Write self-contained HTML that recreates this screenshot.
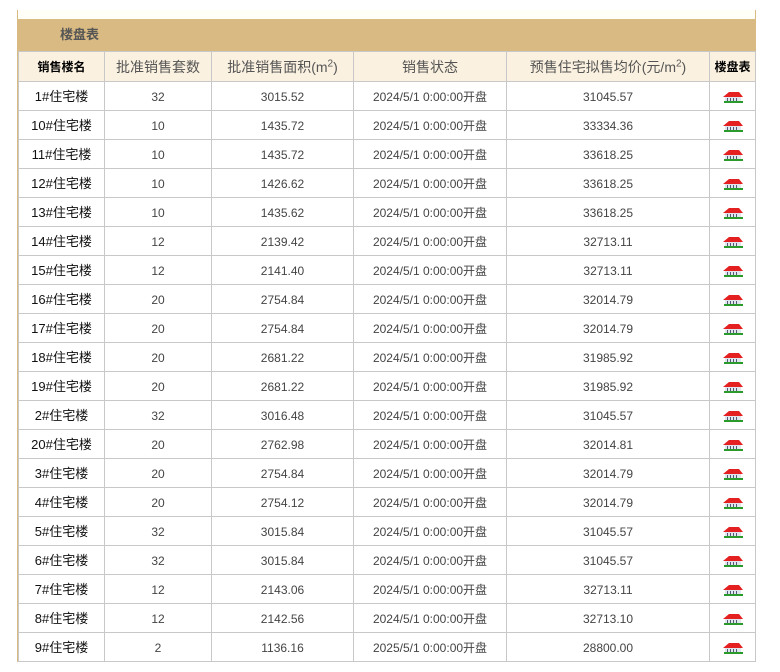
<!DOCTYPE html><html><head><meta charset="utf-8"><style>
body{margin:0;background:#fff;font-family:"Liberation Sans","Noto Sans CJK SC",sans-serif;}
.wrap{position:absolute;left:17px;top:10px;width:737px;border-left:1px solid #d9ba82;border-right:1px solid #d9ba82;}
.top{height:9px;background:#fffff8;}
.band{height:32px;background:#d9ba82;color:#555;font-size:13px;font-weight:bold;line-height:32px;padding-left:42px;}
table{border-collapse:collapse;width:737px;table-layout:fixed;}
td,th{border:1px solid #c8c8c8;text-align:center;font-size:12px;color:#444;height:28px;line-height:28px;padding:0;vertical-align:middle;overflow:hidden;white-space:nowrap;}
td span,th span{display:inline-block;line-height:16px;vertical-align:middle;}
th{background:#fbf1e0;font-weight:normal;font-size:14px;color:#555;height:29px;line-height:29px;}
th.b{font-weight:bold;color:#000;font-size:12px;}
td.n{font-size:13px;color:#111;}
sup{font-size:10px;line-height:0;}
svg{vertical-align:middle;}
</style></head><body><div class="wrap"><div class="top"></div><div class="band">楼盘表</div>
<table><colgroup><col style="width:86px"><col style="width:107px"><col style="width:142px"><col style="width:153px"><col style="width:203px"><col style="width:46px"></colgroup>
<tr><th class="b"><span>销售楼名</span></th><th><span>批准销售套数</span></th><th><span>批准销售面积(m<sup>2</sup>)</span></th><th><span>销售状态</span></th><th><span>预售住宅拟售均价(元/m<sup>2</sup>)</span></th><th class="b"><span>楼盘表</span></th></tr>
<tbody id="t"></tbody></table></div>
<script>
var d=[["1#","32","3015.52","2024","31045.57"],["10#","10","1435.72","2024","33334.36"],["11#","10","1435.72","2024","33618.25"],["12#","10","1426.62","2024","33618.25"],["13#","10","1435.62","2024","33618.25"],["14#","12","2139.42","2024","32713.11"],["15#","12","2141.40","2024","32713.11"],["16#","20","2754.84","2024","32014.79"],["17#","20","2754.84","2024","32014.79"],["18#","20","2681.22","2024","31985.92"],["19#","20","2681.22","2024","31985.92"],["2#","32","3016.48","2024","31045.57"],["20#","20","2762.98","2024","32014.81"],["3#","20","2754.84","2024","32014.79"],["4#","20","2754.12","2024","32014.79"],["5#","32","3015.84","2024","31045.57"],["6#","32","3015.84","2024","31045.57"],["7#","12","2143.06","2024","32713.11"],["8#","12","2142.56","2024","32713.10"],["9#","2","1136.16","2025","28800.00"]];
var ic='<svg width="22" height="12" viewBox="0 0 22 12"><path d="M1 6 L7 1 L17 1 L21 6 Z" fill="#e52020"/><rect x="3" y="6" width="16" height="4" fill="#dfe6ee"/><path d="M5 7h1v3h-1zM8 7h1v3h-1zM11 7h1v3h-1zM14 7h1v3h-1z" fill="#557"/><rect x="2" y="10" width="19" height="2" fill="#2a9a2a"/></svg>';
var h='';d.forEach(function(r){h+='<tr><td class="n"><span>'+r[0]+'住宅楼</span></td><td><span>'+r[1]+'</span></td><td><span>'+r[2]+'</span></td><td><span>'+r[3]+'/5/1 0:00:00开盘</span></td><td><span>'+r[4]+'</span></td><td>'+ic+'</td></tr>';});
document.getElementById('t').innerHTML=h;
</script></body></html>
